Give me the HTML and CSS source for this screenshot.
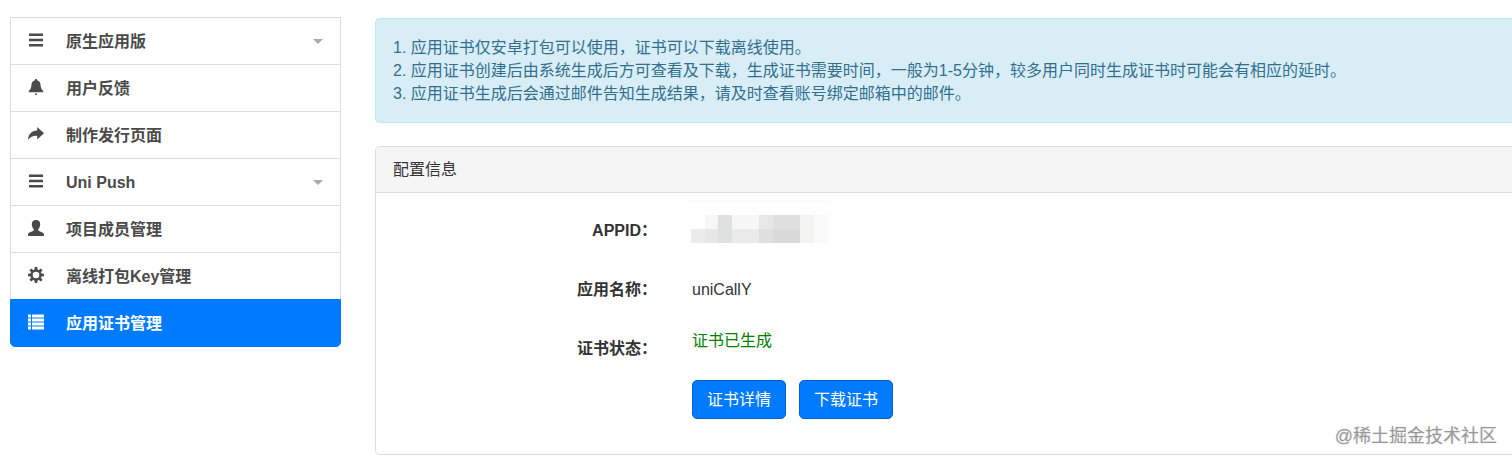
FILE: index.html
```html
<!DOCTYPE html>
<html lang="zh-CN">
<head>
  <meta charset="UTF-8" />
  <meta name="viewport" content="width=device-width, initial-scale=1.0" />
  <title>应用证书管理</title>
  <link rel="stylesheet" href="styles.css">
</head>
<body>
  <div class="layout">
    <!-- 左侧菜单 -->
    <nav class="sidebar">
      <a href="#" class="menu-item">
        <svg class="icon" viewBox="0 0 16 16"><path d="M1 1.500h14v2.600H1zM1 6.700h14v2.600H1zM1 11.900h14v2.600H1z"/></svg>
        <span>原生应用版</span>
        <i class="caret"></i>
      </a>
      <a href="#" class="menu-item">
        <svg class="icon" viewBox="0 0 16 16"><path d="M8 0c.7 0 1.100.5 1.100 1.200 2 .6 3.200 2.200 3.400 4.200.2 3.300.9 5 2.700 6.600v1.300H.8V12c1.800-1.600 2.500-3.300 2.700-6.600.2-2 1.400-3.600 3.400-4.200C6.900.5 7.300 0 8 0zM6.700 14.500h2.600c-.1.900-.6 1.500-1.300 1.500s-1.200-.6-1.300-1.500z"/></svg>
        <span>用户反馈</span>
      </a>
      <a href="#" class="menu-item">
        <svg class="icon" viewBox="0 0 16 16"><path d="M9.200 1 16 7.200l-6.800 6.200V9.900C5.500 9.600 2.500 10.600 0 13.800.4 8.300 3.600 4.800 9.200 4.500z"/></svg>
        <span>制作发行页面</span>
      </a>
      <a href="#" class="menu-item">
        <svg class="icon" viewBox="0 0 16 16"><path d="M1 1.500h14v2.600H1zM1 6.700h14v2.600H1zM1 11.900h14v2.600H1z"/></svg>
        <span>Uni Push</span>
        <i class="caret"></i>
      </a>
      <a href="#" class="menu-item">
        <svg class="icon" viewBox="0 0 16 16"><path d="M8 0c2.600 0 4.200 1.600 4.200 4.200 0 2.100-.8 3.800-1.900 4.900v1.400c.3.600 4.800 1.900 5.400 2.800.2.400.3 1.600.3 2.700H0c0-1.100.1-2.300.3-2.700.6-.9 5.100-2.200 5.400-2.800V9.100C4.600 8 3.800 6.300 3.800 4.200 3.800 1.600 5.400 0 8 0z"/></svg>
        <span>项目成员管理</span>
      </a>
      <a href="#" class="menu-item">
        <svg class="icon" viewBox="0 0 16 16">
          <circle cx="8" cy="8" r="4.500" fill="none" stroke="currentColor" stroke-width="2.400"/>
          <path d="M6.800 0h2.400l.4 3H6.400zM6.800 16h2.400l.4-3H6.400zM0 6.800v2.400l3 .4V6.400zM16 6.800v2.400l-3 .4V6.400zM1.500 3.200l1.700-1.700 2.200 1.700-2.200 2.200zM12.800 1.500l1.700 1.700-1.700 2.200-2.200-2.200zM14.500 12.800l-1.700 1.700-2.200-1.700 2.200-2.200zM3.200 14.500l-1.700-1.700 1.700-2.200 2.200 2.200z"/>
        </svg>
        <span>离线打包Key管理</span>
      </a>
      <a href="#" class="menu-item active">
        <svg class="icon" viewBox="0 0 16 16"><path d="M0 .5h3v3H0zM4 .5h12v3H4zM0 4.500h3v3H0zM4 4.500h12v3H4zM0 8.500h3v3H0zM4 8.500h12v3H4zM0 12.500h3v3H0zM4 12.500h12v3H4z"/></svg>
        <span>应用证书管理</span>
      </a>
    </nav>

    <!-- 右侧内容 -->
    <main class="content">
      <div class="alert">
        <p>1. 应用证书仅安卓打包可以使用，证书可以下载离线使用。</p>
        <p>2. 应用证书创建后由系统生成后方可查看及下载，生成证书需要时间，一般为1-5分钟，较多用户同时生成证书时可能会有相应的延时。</p>
        <p>3. 应用证书生成后会通过邮件告知生成结果，请及时查看账号绑定邮箱中的邮件。</p>
      </div>

      <section class="panel">
        <div class="panel-heading">配置信息</div>
        <dl class="panel-body">
          <dt>APPID：</dt>
          <dd>
            <!-- 打码的 APPID -->
            <svg class="mosaic" viewBox="0 0 146 43" shape-rendering="crispEdges">
              <path fill="#fafafa" d="M0 0h144v2H0z"/>
              <path fill="#f6f7f6" d="M20 15h13v14H20zM47 15h27v14H47z"/>
              <path fill="#ececec" d="M6 29h14v14H6z"/>
              <path fill="#e7e7e7" d="M20 29h13v14H20zM74 15h14v14H74z"/>
              <path fill="#dfe1e1" d="M33 15h14v28H33z"/>
              <path fill="#ebebeb" d="M47 29h27v14H47z"/>
              <path fill="#dfdfdf" d="M74 29h14v14H74zM88 15h27v14H88z"/>
              <path fill="#d9d9d9" d="M88 29h27v14H88z"/>
              <path fill="#f3f3f0" d="M115 15h14v28h-14z"/>
              <path fill="#f9faf9" d="M129 15h14v28h-14z"/>
            </svg>
          </dd>
          <dt>应用名称：</dt>
          <dd>uniCallY</dd>
          <dt>证书状态：</dt>
          <dd class="status">
            <span class="success">证书已生成</span>
            <div class="buttons">
              <button type="button" class="btn">证书详情</button>
              <button type="button" class="btn">下载证书</button>
            </div>
          </dd>
        </dl>
      </section>
    </main>
  </div>

  <div class="watermark">@稀土掘金技术社区</div>
</body>
</html>
```

FILE: styles.css
```css
* {
  box-sizing: border-box;
}
body {
  margin: 0;
  font-family: "Liberation Sans", "Noto Sans CJK SC", sans-serif;
  font-size: 16px;
  line-height: 23px;
  color: #333;
  background: #fff;
}
p, dl, dd {
  margin: 0;
}
.layout {
  display: flex;
  align-items: flex-start;
  gap: 34px;
  padding: 17px 0 6px 10px;
}
/* 左侧菜单 */
.sidebar {
  flex: 0 0 331px;
}
.menu-item {
  display: flex;
  align-items: center;
  height: 48px;
  margin-bottom: -1px;
  padding: 0 17px;
  border: 1px solid #ddd;
  font-weight: bold;
  color: #4a4a4a;
  text-decoration: none;
}
.menu-item.active {
  position: relative;
  margin-bottom: 0;
  background: #007aff;
  border-color: #007aff;
  border-radius: 0 0 5px 5px;
  color: #fff;
}
.icon {
  width: 16px;
  height: 16px;
  margin: 0 22px 2px 0;
  fill: currentColor;
}
.caret {
  margin-left: auto;
  border: 5px solid transparent;
  border-top-color: #aaa;
  border-bottom: 0;
}
/* 右侧内容 */
.content {
  flex: 1;
  min-width: 0;
  padding-top: 1px;
}
.alert {
  margin-bottom: 23px;
  padding: 17px;
  border: 1px solid #bce8f1;
  border-right: 0;
  border-radius: 5px 0 0 5px;
  background: #d9edf7;
  color: #31708f;
}
.panel {
  border: 1px solid #ddd;
  border-right: 0;
  border-radius: 5px 0 0 5px;
}
.panel-heading {
  padding: 11px 17px;
  border-bottom: 1px solid #ddd;
  border-radius: 5px 0 0 0;
  background: #f5f5f5;
}
.panel-body {
  display: grid;
  grid-template-columns: 281px 1fr;
  column-gap: 35px;
  row-gap: 36px;
  padding: 26px 0 35px;
}
.panel-body dt {
  font-weight: bold;
  text-align: right;
}
.mosaic {
  display: block;
  width: 146px;
  height: 43px;
  margin: -19px 0 -1px -7px;
}
.status {
  margin-top: -8px;
}
.success {
  color: #008000;
}
.buttons {
  display: flex;
  gap: 13px;
  margin-top: 28px;
}
.btn {
  height: 39px;
  padding: 0 14px;
  border: 1px solid #0062cc;
  border-radius: 5px;
  background: #007aff;
  color: #fff;
  font: inherit;
}
.watermark {
  position: absolute;
  right: 15px;
  bottom: 13px;
  font-size: 18px;
  color: #999;
  text-shadow: 0 0 2px #ddd;
}
```
